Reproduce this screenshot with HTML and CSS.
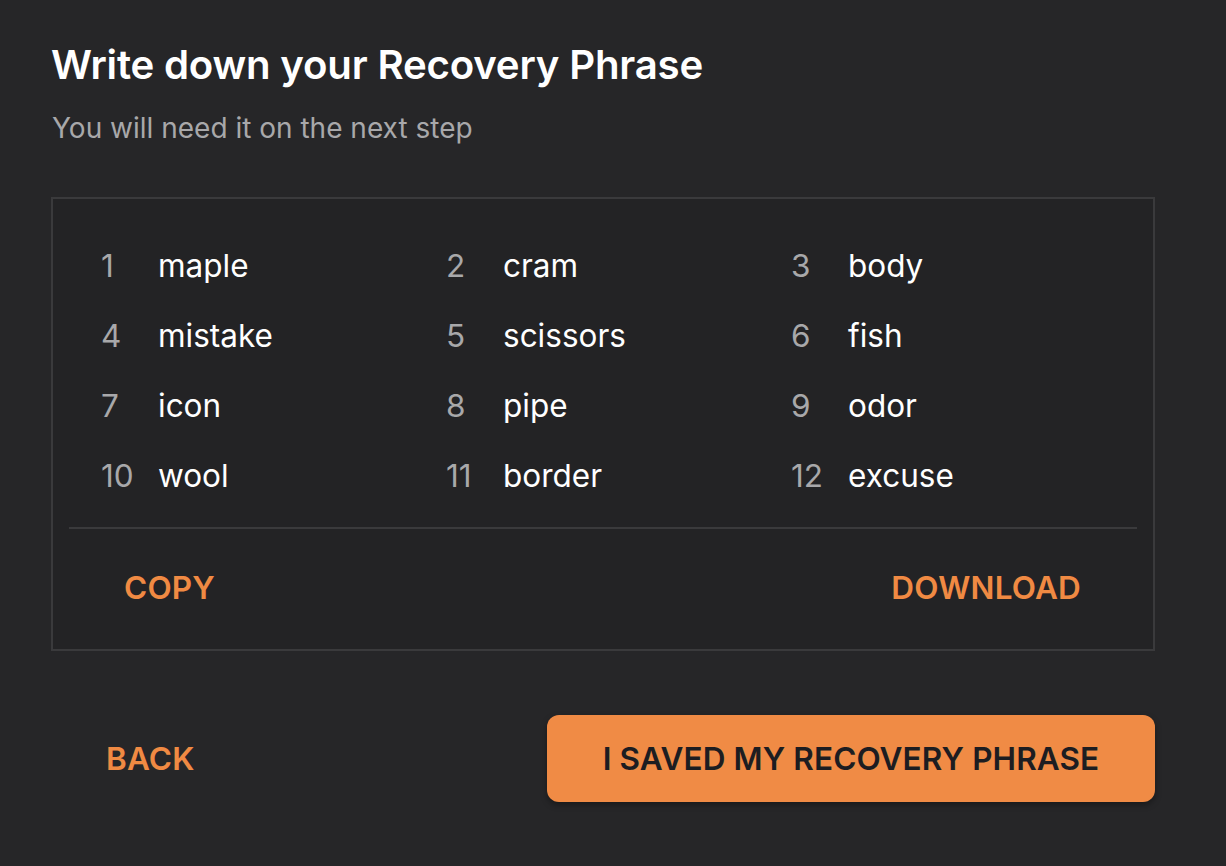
FILE: index.html
```html
<!DOCTYPE html>
<html>
<head>
<meta charset="utf-8">
<link rel="stylesheet" href="styles.css">
</head>
<body>
<main class="page">
  <h1 class="title">Write down your Recovery Phrase</h1>
  <p class="subtitle">You will need it on the next step</p>
  <section class="card">
    <ol class="words">
      <li><span class="num">1</span><span class="word">maple</span></li>
      <li><span class="num">2</span><span class="word">cram</span></li>
      <li><span class="num">3</span><span class="word">body</span></li>
      <li><span class="num">4</span><span class="word">mistake</span></li>
      <li><span class="num">5</span><span class="word">scissors</span></li>
      <li><span class="num">6</span><span class="word">fish</span></li>
      <li><span class="num">7</span><span class="word">icon</span></li>
      <li><span class="num">8</span><span class="word">pipe</span></li>
      <li><span class="num">9</span><span class="word">odor</span></li>
      <li><span class="num">10</span><span class="word">wool</span></li>
      <li><span class="num">11</span><span class="word">border</span></li>
      <li><span class="num">12</span><span class="word">excuse</span></li>
    </ol>
    <div class="divider"></div>
    <div class="card-actions">
      <button class="text-btn copy">COPY</button>
      <button class="text-btn download">DOWNLOAD</button>
    </div>
  </section>
  <div class="footer">
    <button class="text-btn back">BACK</button>
    <button class="primary-btn">I SAVED MY RECOVERY PHRASE</button>
  </div>
</main>
</body>
</html>
```
FILE: styles.css
```css
html, body {
  margin: 0;
  padding: 0;
  background: #262628;
  height: 100%;
}
body {
  font-family: Inter, "Noto Sans", sans-serif;
  color: #ffffff;
}
.page {
  padding: 42px 71px 0 51px;
}
.title {
  margin: 0;
  font-size: 40.2px;
  line-height: 46px;
  font-weight: 600;
  letter-spacing: -0.2px;
  color: #ffffff;
}
.subtitle {
  margin: 24px 0 0 1px;
  font-size: 28px;
  line-height: 32px;
  color: #a8a8aa;
}
.card {
  margin-top: 53px;
  border: 2px solid #3a3a3c;
  background: #232325;
  padding: 48px 16px 0 16px;
}
.words {
  list-style: none;
  margin: 0;
  padding: 0 0 0 32px;
  display: grid;
  grid-template-columns: repeat(3, 345px);
  row-gap: 32px;
}
.words li {
  display: flex;
  align-items: baseline;
  height: 38px;
  font-size: 31.5px;
  line-height: 38px;
}
.num {
  width: 57px;
  color: #a8a8aa;
}
.word {
  color: #ffffff;
}
.divider {
  margin-top: 32px;
  height: 2px;
  background: #3a3a3c;
}
.card-actions {
  display: flex;
  justify-content: space-between;
  padding: 26px 56px 28px 55px;
}
.text-btn {
  background: none;
  border: none;
  padding: 0;
  font-family: inherit;
  font-size: 31.5px;
  line-height: 66px;
  font-weight: 600;
  color: #f08a43;
  letter-spacing: 0.2px;
  cursor: pointer;
}
.footer {
  margin-top: 64px;
  display: flex;
  justify-content: space-between;
  align-items: center;
}
.back {
  margin-left: 55px;
}
.primary-btn {
  width: 608px;
  height: 87px;
  border: none;
  border-radius: 12px;
  background: #f08b45;
  color: #1d1d21;
  font-family: inherit;
  font-size: 31.5px;
  font-weight: 600;
  letter-spacing: 0.1px;
  box-shadow: 0 3px 6px rgba(0, 0, 0, 0.35);
  cursor: pointer;
}
```
